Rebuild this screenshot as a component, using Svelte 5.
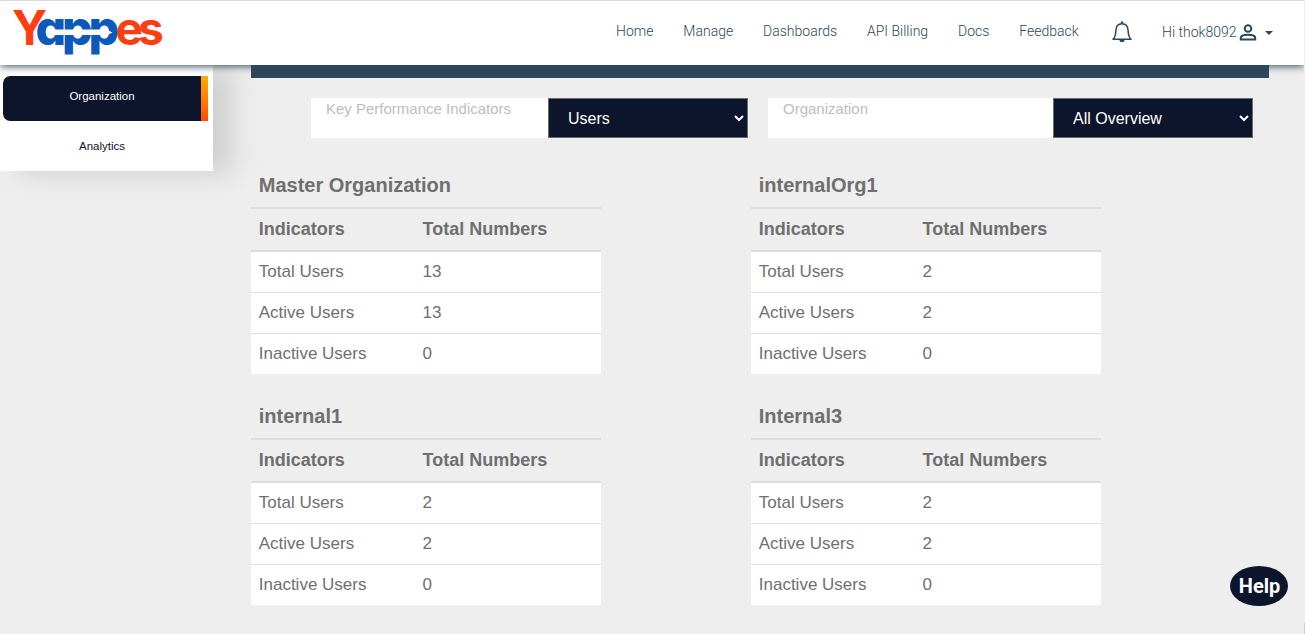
<script>
  const links = ['Home', 'Manage', 'Dashboards', 'API Billing', 'Docs', 'Feedback'];
  const orgs = [
    { name: 'Master Organization', total: 13, active: 13, inactive: 0 },
    { name: 'internalOrg1', total: 2, active: 2, inactive: 0 },
    { name: 'internal1', total: 2, active: 2, inactive: 0 },
    { name: 'Internal3', total: 2, active: 2, inactive: 0 }
  ];
</script>

<div class="page">
  <header>
    <svg class="logo" width="152" height="50" viewBox="12 7 152 50" role="img" aria-label="Yappes">
      <text class="word" y="45"><tspan class="red" x="12">Y</tspan><tspan class="blue" x="35.5 62 88.500">app</tspan><tspan class="red end" x="115.500 138">es</tspan></text>
      <path d="M49 29.500H102V27.500L112.500 32.500L102 37.500V35H49Z" fill="#fff" />
    </svg>
    <nav>
      {#each links as link}<a href="#top">{link}</a>{/each}
    </nav>
    <svg class="bell" width="20" height="22" viewBox="0 0 20 22" fill="none" stroke="#2b4759" stroke-width="1.5">
      <path d="M1 18.2C3 16.5 3.7 14 3.9 9.5C4 5.3 6.400 2.700 10 2.700S16 5.300 16.100 9.500C16.300 14 17 16.500 19 18.200Z" stroke-linejoin="round" />
      <path d="M10 .4V2.700" stroke-width="2.200" />
      <path d="M7.200 18.700H12.800Q12.300 21.300 10 21.300T7.200 18.700Z" fill="#2b4759" stroke="none" />
    </svg>
    <div class="user">
      <span>Hi thok8092</span>
      <svg width="18" height="17" viewBox="0 0 18 17" fill="none" stroke="#2b4759" stroke-width="2">
        <circle cx="9" cy="4.500" r="3.300" />
        <path d="M1.800 15.500V13.800C1.800 11.600 6 10.700 9 10.700S16.200 11.600 16.200 13.800V15.500Z" />
      </svg>
      <i class="caret"></i>
    </div>
  </header>

  <div class="body">
    <aside>
      <button class="active">Organization</button>
      <button>Analytics</button>
    </aside>
    <main>
      <div class="band"></div>
      <div class="filters">
        <div class="filter kpi">
          <label for="kpi">Key Performance Indicators</label>
          <select id="kpi"><option>Users</option></select>
        </div>
        <div class="filter org">
          <label for="org">Organization</label>
          <select id="org"><option>All Overview</option></select>
        </div>
      </div>
      <div class="cards">
        {#each orgs as org}
          <section>
            <h2>{org.name}</h2>
            <div class="row head"><span>Indicators</span><span>Total Numbers</span></div>
            <div class="row"><span>Total Users</span><span>{org.total}</span></div>
            <div class="row"><span>Active Users</span><span>{org.active}</span></div>
            <div class="row"><span>Inactive Users</span><span>{org.inactive}</span></div>
          </section>
        {/each}
      </div>
    </main>
  </div>
  <button class="help">Help</button>
  <i class="edge"></i>
</div>

<style>
  :global(body) { background: #eee; overflow: hidden; }
  .page {
    position: relative;
    height: 634px;
    overflow: hidden;
    font-family: "Liberation Sans", Arial, sans-serif;
    color: #6f6f6f;
  }
  header {
    position: relative;
    z-index: 2;
    box-sizing: border-box;
    display: flex;
    width: 1304px;
    height: 65px;
    padding-left: 12px;
    border-top: 1px solid #d8d8dd;
    background: #fff;
    box-shadow: 0 1px 8px #2b4759;
    color: #2b4759;
    font-family: Roboto, sans-serif;
    font-weight: 300;
    font-size: 14px;
  }
  .logo { flex: none; margin-top: 6px; overflow: visible; }
  .word { font: 700 48px Inter, sans-serif; font-feature-settings: "cv11"; }
  .red { fill: #ff3d12; }
  .end { font-size: 46px; }
  .blue { fill: #0b59ba; font-weight: 800; }
  nav { display: flex; gap: 29.9px; margin: 21px 0 0 452px; line-height: 18px; }
  nav a { color: inherit; text-decoration: none; white-space: nowrap; }
  .bell { margin: 20px 0 0 33.500px; }
  .user { display: flex; margin: 22px 0 0 30px; line-height: 18px; white-space: nowrap; }
  .user svg { margin: 1px 0 0 2.500px; }
  .caret {
    width: 0; height: 0;
    margin: 8px 0 0 8px;
    border: 4px solid transparent;
    border-top-color: #2b4759;
    border-bottom: 0;
  }
  .body { display: flex; align-items: flex-start; }
  aside {
    box-sizing: border-box;
    width: 213px;
    height: 106px;
    padding: 11px 5px 0 3px;
    background: #fff;
    box-shadow: 20px 3px 25px #d0d0d0;
  }
  aside button {
    display: block;
    width: 205px;
    height: 45px;
    padding: 0 7px 5px 0;
    border: 0;
    background: none;
    color: #0d152d;
    font: 11.5px "Liberation Sans", Arial, sans-serif;
  }
  aside .active {
    margin-bottom: 5px;
    padding-right: 0;
    border-right: 7px solid;
    border-radius: 7px 0 0 7px;
    background: linear-gradient(#0d152d, #0d152d) padding-box, linear-gradient(#ffae00, #ff4d00) border-box;
    border-color: transparent;
    color: #fff;
  }
  main { width: 1018px; margin-left: 38px; }
  .band { position: relative; z-index: 2; height: 13px; background: #2b4759; }
  .filters { display: flex; gap: 20px; padding: 20px 0 0 60px; }
  .filter { display: flex; justify-content: space-between; height: 40px; background: #fff; }
  .kpi { width: 437px; }
  .org { width: 485px; }
  label { padding: 2px 0 0 15px; color: #bdbdbd; font-size: 15px; line-height: 18px; }
  select {
    box-sizing: border-box;
    width: 200px;
    height: 40px;
    padding: 0 0 0 15px;
    border: 1px solid #6b6b6b;
    border-radius: 0;
    background: #0d152d;
    color: #fff;
    font: 16px "Liberation Sans", Arial, sans-serif;
  }
  .cards { display: grid; grid-template-columns: 350px 350px; column-gap: 150px; row-gap: 22px; margin-top: 27px; }
  h2 { margin: 0; padding: 0 7.75px 1px; font-size: 20px; line-height: 41px; height: 41px; }
  section { height: 209px; }
  .row {
    display: grid;
    grid-template-columns: 163.75px 1fr;
    box-sizing: border-box;
    height: 41px;
    padding-left: 7.75px;
    border-top: 1px solid #ddd;
    background: #fff;
    font-size: 17px;
    line-height: 39px;
  }
  .head { height: 43px; border-top-width: 2px; background: none; font-size: 18px; line-height: 41px; font-weight: 700; }
  .head + .row { height: 42px; border-top-width: 2px; }
  .help {
    position: absolute;
    left: 1230px;
    top: 566px;
    width: 58px;
    height: 40px;
    padding: 0 0 0 1px;
    border: 0;
    border-radius: 50%;
    background: #0d152d;
    color: #fff;
    font: 700 20px Roboto, sans-serif;
  }
  .edge {
    position: absolute;
    z-index: 3;
    right: 0;
    top: 0;
    width: 1px;
    height: 634px;
    background: linear-gradient(#eee 623px, #ccc 623px);
  }
</style>
